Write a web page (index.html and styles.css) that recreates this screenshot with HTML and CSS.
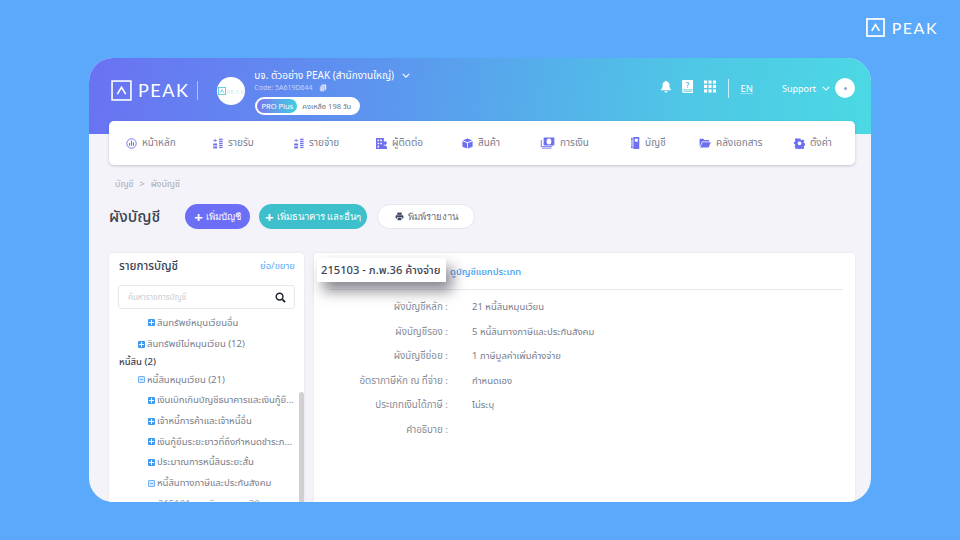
FILE: index.html
```html
<!DOCTYPE html>
<html lang="th">
<head>
<meta charset="utf-8">
<title>PEAK</title>
<link rel="stylesheet" href="styles.css">
</head>
<body>
<div class="top-brand">
  <svg class="logo-mark small" viewBox="0 0 20 20"><rect x="1" y="1" width="18" height="18" fill="none" stroke="#fff" stroke-width="1.8"/><path d="M6 13.5 10 7l4 6.500" fill="none" stroke="#fff" stroke-width="1.8"/></svg>
  <span class="logo-text small">PEAK</span>
</div>
<main class="window">
  <header class="head">
    <div class="brand">
      <svg class="logo-mark" viewBox="0 0 20 20"><rect x="1" y="1" width="18" height="18" fill="none" stroke="#fff" stroke-width="1.5"/><path d="M6 13.5 10 7l4 6.500" fill="none" stroke="#fff" stroke-width="1.5"/></svg>
      <span class="logo-text">PEAK</span>
    </div>
    <span class="brand-sep"></span>
    <div class="avatar">
      <svg class="avatar-mark" viewBox="0 0 10 10"><rect x=".5" y=".5" width="9" height="9" fill="none" stroke="#45c4e0"/><path d="M3 7 5 3.500 7 7" fill="none" stroke="#45c4e0"/></svg>
      <span class="avatar-text">PEAK</span>
    </div>
    <div class="company">
      <div class="company-name">บจ. ตัวอย่าง PEAK (สำนักงานใหญ่)
        <svg class="chev" viewBox="0 0 10 6"><path d="M1 1l4 4 4-4" fill="none" stroke="#fff" stroke-width="1.4"/></svg>
      </div>
      <div class="company-code">Code: 5A619D644
        <svg class="copy" viewBox="0 0 10 10"><rect x="3" y="0.5" width="6" height="7" rx="1" fill="#dfe6fb"/><rect x="1" y="2.500" width="6" height="7" rx="1" fill="#c6d3f7" stroke="#7a92ee" stroke-width=".5"/></svg>
      </div>
      <div class="plan"><span class="plan-tag">PRO Plus</span><span class="plan-left">คงเหลือ 198 วัน</span></div>
    </div>
    <div class="head-right">
      <svg class="hicon" viewBox="0 0 14 15"><path d="M7 0.800c.7 0 1 .5 1 1 2 .5 3 2 3 4 0 3 .7 4.300 2 5.500v.7H1v-.7C2.300 10.100 3 8.800 3 5.800c0-2 1-3.500 3-4 0-.5.300-1 1-1z" fill="#fff"/><path d="M5 13h4c0 1-1 1.600-2 1.600S5 14 5 13z" fill="#fff"/></svg>
      <svg class="hicon book" viewBox="0 0 12 14"><path d="M0 1.200C0 .5.500 0 1.200 0H12V10.200H1.500C.7 10.200 0 10.700 0 11.500z" fill="#fff"/><path d="M0 12c0-.8.700-1 1.500-1H12v3H1.500C.7 14 0 13 0 12z" fill="#fff"/><path d="M2 12.200H11" stroke="#4fc6e4" stroke-width=".9"/><path d="M4.500 3.500c.2-1.200 3-1.400 3 .3 0 1.200-1.500 1.100-1.500 2.300" fill="none" stroke="#4fc6e4" stroke-width="1.100"/><rect x="5.400" y="7" width="1.200" height="1.200" fill="#4fc6e4"/></svg>
      <svg class="hicon grid" viewBox="0 0 13 13" fill="#fff"><rect width="3.400" height="3.400"/><rect x="4.800" width="3.400" height="3.400"/><rect x="9.600" width="3.400" height="3.400"/><rect y="4.800" width="3.400" height="3.400"/><rect x="4.800" y="4.800" width="3.400" height="3.400"/><rect x="9.600" y="4.800" width="3.400" height="3.400"/><rect y="9.600" width="3.400" height="3.400"/><rect x="4.800" y="9.600" width="3.400" height="3.400"/><rect x="9.600" y="9.600" width="3.400" height="3.400"/></svg>
      <span class="head-sep"></span>
      <span class="lang">EN</span>
      <span class="support">Support
        <svg class="chev" viewBox="0 0 10 6"><path d="M1 1l4 4 4-4" fill="none" stroke="#fff" stroke-width="1.300"/></svg>
      </span>
      <span class="user"><span class="user-dot"></span></span>
    </div>
  </header>

  <nav class="nav">
    <a class="nav-item"><svg viewBox="0 0 14 14"><circle cx="7" cy="7" r="6" fill="none" stroke="#6e70f0" stroke-width="1.200"/><path d="M4.500 10V6.500M7 10V3.500M9.500 10V5.500" stroke="#6e70f0" stroke-width="1.400"/></svg>หน้าหลัก</a>
    <a class="nav-item"><svg viewBox="0 0 14 14" fill="#6e70f0"><path d="M1.500 2.500h2V.8h1v1.700h2v1h-2v1.700h-1V3.500h-2z"/><rect x="1.500" y="7" width="5" height="2.500"/><rect x="1.500" y="10.800" width="5" height="2.500"/><rect x="9" y=".8" width="4.500" height="1.600"/><rect x="9" y="3.400" width="4.500" height="1.600"/><rect x="9" y="6" width="4.500" height="1.600"/><rect x="9" y="8.600" width="4.500" height="1.600"/><rect x="9" y="11.200" width="4.500" height="1.600"/></svg>รายรับ</a>
    <a class="nav-item"><svg viewBox="0 0 14 14" fill="#6e70f0"><path d="M1.500 2.500h2V.8h1v1.700h2v1h-2v1.700h-1V3.500h-2z"/><rect x="1.500" y="7" width="5" height="2.500"/><rect x="1.500" y="10.800" width="5" height="2.500"/><rect x="9" y=".8" width="4.500" height="1.600"/><rect x="9" y="3.400" width="4.500" height="1.600"/><rect x="9" y="6" width="4.500" height="1.600"/><rect x="9" y="8.600" width="4.500" height="1.600"/><rect x="9" y="11.200" width="4.500" height="1.600"/></svg>รายจ่าย</a>
    <a class="nav-item"><svg viewBox="0 0 14 14"><path d="M0 0h10v14H0z" fill="#6e70f0"/><path d="M2 2h2v2H2zM5.500 2h2v2h-2zM2 6h2v2H2zM5.500 6h2v2h-2zM2 10h2v2H2z" fill="#fff"/><circle cx="11.500" cy="6.500" r="2.300" fill="#6e70f0"/><path d="M8.500 14c0-3 1.200-4.500 3-4.500s2.500 1.500 2.500 4.500z" fill="#6e70f0"/></svg>ผู้ติดต่อ</a>
    <a class="nav-item"><svg viewBox="0 0 14 14" fill="#6e70f0"><path d="M7 .5l6 2.400L7 5.300 1 2.900z"/><path d="M.5 4l6 2.400v7.100l-6-2.400z"/><path d="M13.500 4l-6 2.400v7.100l6-2.400z"/></svg>สินค้า</a>
    <a class="nav-item"><svg class="money" viewBox="0 0 16 14"><rect x="3.500" y=".5" width="12.500" height="9.500" rx="1" fill="#6e70f0"/><ellipse cx="9.700" cy="5.200" rx="2.800" ry="3.500" fill="#fff"/><path d="M.8 3.500V11.200H13.500" fill="none" stroke="#8d8ff3" stroke-width="1.400"/><path d="M1.500 13.200H12.500" stroke="#8d8ff3" stroke-width="1.200"/></svg>การเงิน</a>
    <a class="nav-item"><svg class="book" viewBox="0 0 10 14"><path d="M3 .0h7v14H3z" fill="#6e70f0"/><rect x="4.800" y="2" width="3.500" height="3.500" fill="#fff"/><path d="M.5 1h1.800v12H.5z" fill="#6e70f0"/><path d="M0 4.500h3M0 7h3M0 9.500h3" stroke="#fff" stroke-width=".8"/></svg>บัญชี</a>
    <a class="nav-item"><svg class="folder" viewBox="0 0 14 12"><path d="M.5 10V1h4.500l1.300 1.500H12v1.700H3.500L.9 10z" fill="#6e70f0"/><path d="M4 5.200H14L11.300 11.500H1.200z" fill="#6e70f0"/></svg>คลังเอกสาร</a>
    <a class="nav-item"><svg viewBox="0 0 14 14" fill-rule="evenodd"><path d="M5.700.5h2.600l.4 1.900 1.300.6 1.700-1 1.800 1.800-1 1.700.6 1.300 1.900.4v2.600l-1.900.4-.6 1.300 1 1.700-1.800 1.800-1.700-1-1.300.6-.4 1.900H5.700l-.4-1.900-1.300-.6-1.700 1L.5 11.200l1-1.700-.6-1.300L-.9 7.800V5.300l1.900-.4.6-1.300-1-1.700L2.400.1l1.700 1 1.200-.6zM7 4.500a2.500 2.500 0 1 0 0 5 2.500 2.500 0 0 0 0-5z" transform="translate(.3 0) scale(.96)" fill="#6e70f0"/></svg>ตั้งค่า</a>
  </nav>

  <div class="crumbs">บัญชี<span class="crumb-sep">&gt;</span>ผังบัญชี</div>

  <div class="title-row">
    <h1 class="title">ผังบัญชี</h1>
    <button class="btn btn-purple"><span class="plus">+</span> เพิ่มบัญชี</button>
    <button class="btn btn-teal"><span class="plus">+</span> เพิ่มธนาคาร และอื่นๆ</button>
    <button class="btn btn-white"><svg class="print" viewBox="0 0 12 12" fill="#3d4560"><rect x="3" y=".8" width="6" height="3"/><rect x=".8" y="4.300" width="10.400" height="4.500" rx="1"/><rect x="3" y="7.500" width="6" height="3.700" stroke="#fff" stroke-width=".7"/></svg> พิมพ์รายงาน</button>
  </div>

  <div class="panels">
    <section class="panel tree-panel">
      <div class="tree-head"><strong>รายการบัญชี</strong><a class="link">ย่อ/ขยาย</a></div>
      <div class="search"><span>ค้นหารายการบัญชี</span>
        <svg viewBox="0 0 12 12"><circle cx="5" cy="5" r="3.700" fill="none" stroke="#1c2230" stroke-width="1.600"/><path d="M8 8l3 3" stroke="#1c2230" stroke-width="2"/></svg>
      </div>
      <ul class="tree">
        <li class="l2 first"><i class="box plus-box"></i>สินทรัพย์หมุนเวียนอื่น</li>
        <li class="l1"><i class="box plus-box"></i>สินทรัพย์ไม่หมุนเวียน (12)</li>
        <li class="l0">หนี้สิน (2)</li>
        <li class="l1"><i class="box minus-box"></i>หนี้สินหมุนเวียน (21)</li>
        <li class="l2"><i class="box plus-box"></i>เงินเบิกเกินบัญชีธนาคารและเงินกู้ยื...</li>
        <li class="l2"><i class="box plus-box"></i>เจ้าหนี้การค้าและเจ้าหนี้อื่น</li>
        <li class="l2"><i class="box plus-box"></i>เงินกู้ยืมระยะยาวที่ถึงกำหนดชำระภ...</li>
        <li class="l2"><i class="box plus-box"></i>ประมาณการหนี้สินระยะสั้น</li>
        <li class="l2"><i class="box minus-box"></i>หนี้สินทางภาษีและประกันสังคม</li>
        <li class="l3">215101 - ภาษีขาย ภ.พ.30</li>
      </ul>
      <span class="scrollbar"></span>
    </section>
    <section class="panel detail">
      <div class="detail-head"><a class="link detail-link">ดูบัญชีแยกประเภท</a></div>
      <dl class="rows">
        <dt>ผังบัญชีหลัก :</dt><dd>21 หนี้สินหมุนเวียน</dd>
        <dt>ผังบัญชีรอง :</dt><dd>5 หนี้สินทางภาษีและประกันสังคม</dd>
        <dt>ผังบัญชีย่อย :</dt><dd>1 ภาษีมูลค่าเพิ่มค้างจ่าย</dd>
        <dt>อัตราภาษีหัก ณ ที่จ่าย :</dt><dd>กำหนดเอง</dd>
        <dt>ประเภทเงินได้ภาษี :</dt><dd>ไม่ระบุ</dd>
        <dt>คำอธิบาย :</dt><dd></dd>
      </dl>
      <div class="callout">215103 - ภ.พ.36 ค้างจ่าย</div>
    </section>
  </div>
</main>
</body>
</html>
```

FILE: styles.css
```css
* { box-sizing: border-box; }
html, body { margin: 0; height: 540px; overflow: hidden; }
body {
  background: #5aa9fa;
  font-family: "Noto Sans", "Noto Sans Thai", "DejaVu Sans", sans-serif;
  color: #5b6272;
}
.top-brand {
  height: 58px;
  padding: 18px 22px 0 0;
  display: flex;
  justify-content: flex-end;
  align-items: flex-start;
  gap: 7px;
}
.logo-mark { width: 21px; height: 21px; flex: none; }
.logo-mark.small { width: 19px; height: 19px; }
.logo-text {
  font-family: "Lato", sans-serif;
  font-weight: 400;
  color: #fff;
  font-size: 18px;
  line-height: 21px;
  letter-spacing: 1.5px;
}
.logo-text.small { font-size: 16px; line-height: 19px; letter-spacing: 1.5px; }
.window {
  width: 782px;
  height: 444px;
  margin-left: 89px;
  background: #f3f3f9;
  border-radius: 24px;
  overflow: hidden;
  position: relative;
}
.head {
  height: 76px;
  padding: 0 16px 0 22px;
  background: linear-gradient(100deg, #6a72f2 0%, #5b98ef 40%, #4fc6e6 75%, #4bd9e4 100%);
  display: flex;
  align-items: flex-start;
}
.brand { display: flex; align-items: center; gap: 6px; margin-top: 22px; }
.brand-sep { width: 1px; height: 19px; margin: 23px 19px 0 8px; background: rgba(255,255,255,.5); }
.avatar {
  width: 28px; height: 28px; margin-top: 19px; border-radius: 50%;
  background: #fff; display: flex; align-items: center; padding-left: 1px; gap: 0;
}
.avatar-mark { width: 8px; height: 8px; flex: none; }
.avatar-text { font: 300 6px "Lato", sans-serif; letter-spacing: 1px; color: #8fdcec; }
.company { margin: 10px 0 0 9px; color: #fff; }
.company-name { font-size: 10px; line-height: 14px; display: flex; align-items: center; gap: 8px; }
.chev { width: 8px; height: 5px; flex: none; }
.company-code { font-size: 7px; line-height: 10px; margin-top: 1px; color: #c6d4fa; display: flex; align-items: center; gap: 6px; }
.copy { width: 8px; height: 8px; }
.plan {
  display: flex; align-items: center; width: 105px; height: 18px; margin: 4px 0 0 1px;
  padding: 1px; border-radius: 10px; background: #fff;
}
.plan-tag {
  width: 40px; height: 14px; margin-left: 1px; border-radius: 8px;
  background: linear-gradient(90deg, #7d74ef, #3fd0e0);
  color: #fff; font-size: 7.500px; line-height: 14px; text-align: center;
}
.plan-left { margin-left: 5px; font-size: 7.500px; color: #6b7280; }
.head-right { margin-left: auto; margin-top: 20px; display: flex; align-items: center; color: #fff; height: 20px; }
.hicon { width: 12px; height: 13px; flex: none; margin-top: -3px; }
.hicon.book { width: 11px; margin-left: 10px; }
.hicon.grid { width: 12px; margin-left: 11px; }
.head-sep { width: 1px; height: 19px; margin: 0 12px; background: rgba(255,255,255,.7); }
.lang { font-size: 9.500px; text-decoration: underline; text-decoration-color: rgba(255,255,255,.4); }
.support { margin-left: 29px; font-size: 9px; display: flex; align-items: center; gap: 6px; }
.user { width: 20px; height: 20px; margin-left: 5px; border-radius: 50%; background: #fff; display: flex; align-items: center; justify-content: center; }
.user-dot { width: 3px; height: 3px; background: #9aa6cc; border-radius: 50%; }

.nav {
  margin: -13px 16px 0 20px;
  height: 44px;
  background: #fff;
  border-radius: 5px;
  box-shadow: 0 1px 3px rgba(60,60,90,.25);
  display: grid;
  grid-template-columns: 86px 81px 83px 86px 78px 90px 69px 95px auto;
  align-items: center;
  padding-left: 17px;
  position: relative;
}
.nav-item { display: flex; align-items: center; gap: 5px; font-size: 10px; color: #7b8090; white-space: nowrap; }
.nav-item svg { width: 11px; height: 11px; flex: none; }
.nav-item svg.money { width: 15px; height: 12px; }
.nav-item svg.book { width: 10px; height: 12px; }
.nav-item svg.folder { width: 12px; height: 10px; }
.crumbs { margin: 13px 0 0 26px; font-size: 9px; line-height: 12px; color: #a8abb7; }
.crumb-sep { margin: 0 6px; }
.title-row { margin: 14px 0 0 20px; display: flex; align-items: center; height: 25px; }
.title { margin: 0 25px 0 0; font-size: 15.500px; font-weight: 500; color: #3c4354; line-height: 25px; }
.btn {
  height: 25px; border: 0; border-radius: 13px; padding: 0; margin-right: 10px;
  font: 500 9.500px "Noto Sans", sans-serif; display: flex; align-items: center; justify-content: center; gap: 3px;
}
.plus { font-size: 15px; font-weight: 700; line-height: 12px; }
.btn-purple { width: 65px; margin-right: 9px; background: #6c6ff5; color: #fff; }
.btn-teal { width: 108px; background: #3dc0cc; color: #fff; }
.btn-white { width: 98px; background: #fff; color: #666b7c; border: 1px solid #e5e6ee; font-weight: 400; }
.print { width: 9px; height: 9px; margin-right: 1px; }
.panels { margin: 24px 16px 0 20px; display: flex; gap: 10px; align-items: stretch; height: 260px; }
.panel { background: #fff; border-radius: 4px; position: relative; box-shadow: 0 0 3px rgba(60,60,90,.08); }
.tree-panel { width: 195px; overflow: hidden; }
.tree-head { display: flex; justify-content: space-between; align-items: center; padding: 5px 9px 0 10px; height: 21px; }
.tree-head strong { font-size: 11.500px; font-weight: 500; color: #3c4354; }
.link { font-size: 9.500px; color: #5aa9fa; }
.search {
  margin: 11px 9px 0; height: 24px; border: 1px solid #e6e7ee; border-radius: 3px;
  display: flex; justify-content: space-between; align-items: center; padding: 0 8px 0 9px;
  font-size: 8px; color: #c9ccd6;
}
.search svg { width: 11px; height: 11px; }
.tree { list-style: none; margin: 3px 0 0; padding: 0 0 0 10px; color: #777d8c; font-size: 9.500px; }
.tree li { height: 20.700px; line-height: 20px; display: flex; align-items: center; white-space: nowrap; }
.tree li.first { height: 21.700px; }
.tree .l0 { height: 15px; color: #3c4354; font-weight: 500; }
.tree .l1 { padding-left: 19px; }
.tree .l2 { padding-left: 29px; }
.tree .l3 { padding-left: 39px; color: #9a9fac; }
.box { width: 7px; height: 7px; margin-right: 2px; flex: none; border-radius: 1px; position: relative; }
.plus-box { background: #3f9bf0; }
.plus-box::before { content: ""; position: absolute; left: 1px; right: 1px; top: 3px; height: 1px; background: #fff; }
.plus-box::after { content: ""; position: absolute; top: 1px; bottom: 1px; left: 3px; width: 1px; background: #fff; }
.minus-box { background: #d6e8fb; border: 1px solid #6fb2f4; }
.minus-box::before { content: ""; position: absolute; left: 1px; right: 1px; top: 2px; height: 1px; background: #6fb2f4; }
.scrollbar { position: absolute; right: 0; top: 139px; width: 5px; height: 120px; border-radius: 3px; background: #d0d0d4; }
.detail { flex: 1; padding: 0 12px 0 16px; }
.detail-head { height: 37px; border-bottom: 1px solid #e7e8ee; padding: 5px 0 0 120px; }
.detail-link { font-size: 9.500px; font-weight: 500; color: #3f9bf0; }
.rows { margin: 5px 0 0; display: grid; grid-template-columns: 118px 1fr; grid-auto-rows: 24.500px; column-gap: 24px; font-size: 9.500px; align-items: center; }
.rows dt { text-align: right; color: #878c99; font-size: 9.800px; }
.rows dd { margin: 0; color: #777d8c; }
.callout {
  position: absolute; left: 3px; top: 5px; width: 129px; height: 24px;
  background: #fff; color: #3c4354; font-size: 11.200px; line-height: 24px; padding-left: 4px; font-weight: 500;
  box-shadow: 6px 9px 14px rgba(20,20,35,.5); white-space: nowrap;
}
```
